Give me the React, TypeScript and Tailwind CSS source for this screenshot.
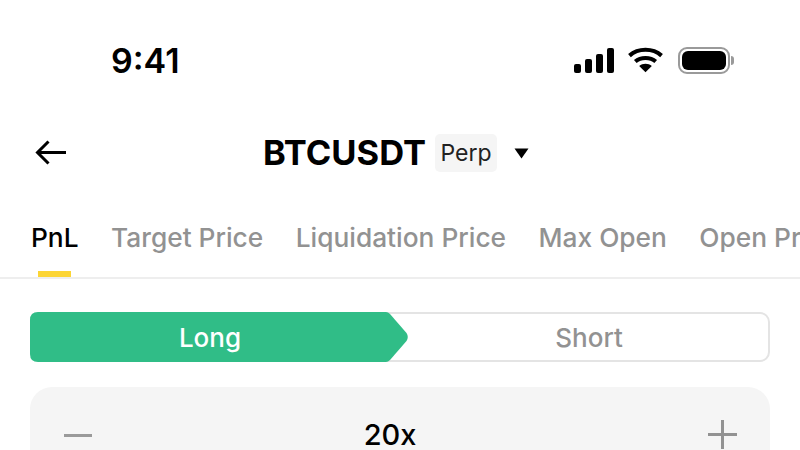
const tabs = ['Target Price', 'Liquidation Price', 'Max Open', 'Open Price']

const SignalIcon = () => (
  <svg className="mr-[-1px]" width="40" height="25" viewBox="0 0 40 25" fill="#000">
    <rect x="0" y="16" width="7" height="9" rx="2" />
    <rect x="11" y="11" width="7" height="14" rx="2" />
    <rect x="22" y="6" width="7" height="19" rx="2" />
    <rect x="33" y="0" width="7" height="25" rx="2" />
  </svg>
)

const WifiIcon = () => (
  <svg width="35" height="26" viewBox="0 0 36 26" fill="none" stroke="#000" strokeWidth="4.2">
    <path d="M1.5 8.5C10.5 0.5 25.5 0.5 34.5 8.5" />
    <path d="M7.5 14.5C13 9.8 23 9.8 28.5 14.5" />
    <path d="M18 25.5L11.5 19.2C15 16.2 21 16.2 24.5 19.2Z" fill="#000" stroke="none" />
  </svg>
)

const BatteryIcon = () => (
  <div className="flex items-center">
    <div className="w-[52px] h-[27px] rounded-[9px] border-2 border-[#9a9a9a] p-[2px]">
      <div className="w-full h-full rounded-[6px] bg-black"></div>
    </div>
    <div className="ml-[1px] w-[3px] h-[9px] rounded-r-full bg-[#9a9a9a]"></div>
  </div>
)

export default function App() {
  return (
    <div className="w-[800px] h-[450px] overflow-hidden bg-white font-['Inter',sans-serif]">
      <div className="h-[120px] flex items-center justify-between pl-[111px] pr-[66px]">
        <span className="mt-[2px] text-[34px] leading-none font-semibold text-black">9:41</span>
        <div className="flex items-center gap-[15px]">
          <SignalIcon />
          <WifiIcon />
          <BatteryIcon />
        </div>
      </div>

      <div className="relative h-[64px] flex items-center justify-center">
        <svg className="absolute left-[35px] top-[20px]" width="32" height="25" viewBox="0 0 32 25" fill="none" stroke="#000" strokeWidth="3">
          <path d="M31 12.5H3M13.5 1.5L2.5 12.5L13.5 23.5" />
        </svg>
        <div className="flex items-center ml-[-8px] mt-[2px]">
          <span className="text-[34.5px] leading-none font-bold text-black">BTCUSDT</span>
          <span className="ml-[9px] w-[62px] h-[38px] rounded-[5px] bg-[#f5f5f5] flex items-center justify-center text-[23px] text-[#222]">Perp</span>
          <svg className="ml-[17px]" width="15" height="11" viewBox="0 0 15 11" fill="#000">
            <path d="M0.5 0.5H14.5L7.5 10.5Z" />
          </svg>
        </div>
      </div>

      <div className="h-[95px] border-b-2 border-[#eeeeee] flex pl-[31px] gap-[32.5px] overflow-hidden pt-[38px]">
        <div className="flex flex-col items-center shrink-0">
          <span className="text-[26.3px] leading-[32px] font-medium text-black">PnL</span>
          <div className="w-[33px] h-[6px] bg-[#fcd535] mt-[17px]"></div>
        </div>
        {tabs.map((t) => (
          <span key={t} className="shrink-0 text-[26.3px] leading-[32px] font-medium text-[#929292]">{t}</span>
        ))}
      </div>

      <div className="px-[30px] pt-[33px]">
        <div className="relative h-[50px] rounded-[10px] border-2 border-[#e4e4e4] flex">
          <div className="absolute left-[-2px] top-[-2px] w-[380px] h-[50px]">
            <svg className="absolute inset-0" width="380" height="50" viewBox="0 0 380 50" fill="#30bd87">
              <path d="M8 0H356Q358 0 360 2L376.5 21Q379 25 376.5 29L360 48Q358 50 356 50H8Q0 50 0 42V8Q0 0 8 0Z" />
            </svg>
            <span className="absolute left-0 top-0 w-[360px] h-full flex items-center justify-center text-[26px] font-medium text-white">Long</span>
          </div>
          <div className="ml-auto w-[358px] flex items-center justify-center text-[26px] font-medium text-[#929292]">Short</div>
        </div>

        <div className="mt-[25px] h-[120px] rounded-t-[22px] bg-[#f5f5f5] flex justify-between items-start pl-[34px] pr-[33px] pt-[28px]">
          <div className="w-[28px] h-[3px] bg-[#9a9a9a] mt-[19px]"></div>
          <span className="mr-[20px] text-[29px] leading-[40px] font-medium text-black">20x</span>
          <svg className="mt-[5px]" width="29" height="29" viewBox="0 0 29 29" stroke="#929292" strokeWidth="3">
            <path d="M0 14.5H29M14.5 0V29" />
          </svg>
        </div>
      </div>
    </div>
  )
}
